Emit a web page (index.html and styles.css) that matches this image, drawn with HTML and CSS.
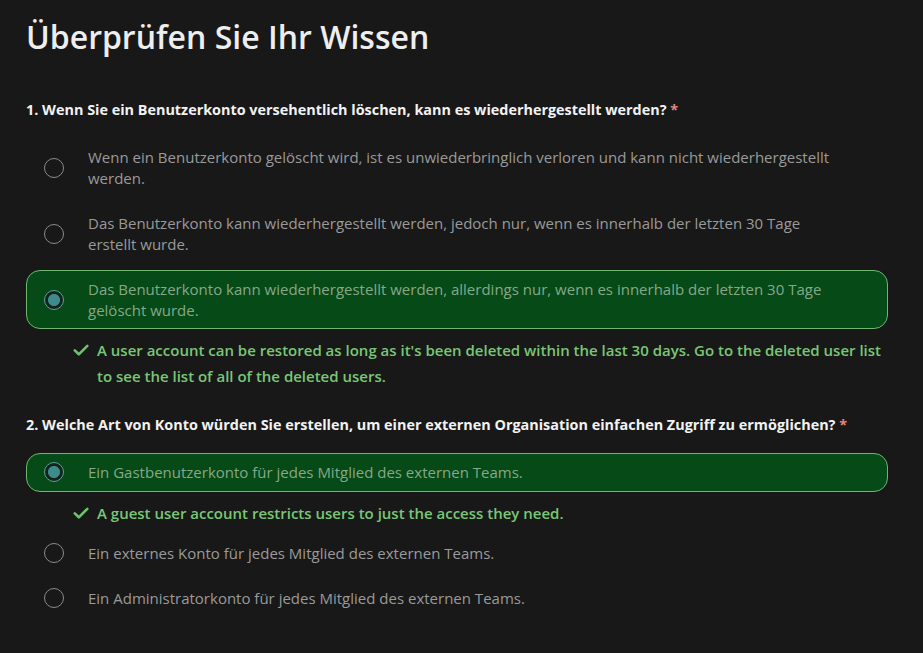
FILE: index.html
```html
<!DOCTYPE html>
<html lang="de">
<head>
<meta charset="utf-8">
<title>Überprüfen Sie Ihr Wissen</title>
<link rel="stylesheet" href="styles.css">
</head>
<body>
<main class="quiz">
  <h1 class="title">Überprüfen Sie Ihr Wissen</h1>

  <section class="question">
    <h2 class="q-text">1. Wenn Sie ein Benutzerkonto versehentlich löschen, kann es wiederhergestellt werden? <span class="req">*</span></h2>
    <div class="options">
      <label class="option">
        <span class="radio"></span>
        <span class="opt-text">Wenn ein Benutzerkonto gelöscht wird, ist es unwiederbringlich verloren und kann nicht wiederhergestellt werden.</span>
      </label>
      <label class="option">
        <span class="radio"></span>
        <span class="opt-text">Das Benutzerkonto kann wiederhergestellt werden, jedoch nur, wenn es innerhalb der letzten 30 Tage erstellt wurde.</span>
      </label>
      <label class="option selected">
        <span class="radio"></span>
        <span class="opt-text">Das Benutzerkonto kann wiederhergestellt werden, allerdings nur, wenn es innerhalb der letzten 30 Tage gelöscht wurde.</span>
      </label>
      <div class="feedback">
        <svg class="check" viewBox="0 0 16 16" width="16" height="16"><path d="M1.8 8.4 L5.8 12.3 L14.3 3.8" fill="none" stroke="currentColor" stroke-width="2.6" stroke-linecap="round" stroke-linejoin="round"/></svg>
        <p class="fb-text">A user account can be restored as long as it's been deleted within the last 30 days. Go to the deleted user list to see the list of all of the deleted users.</p>
      </div>
    </div>
  </section>

  <section class="question">
    <h2 class="q-text">2. Welche Art von Konto würden Sie erstellen, um einer externen Organisation einfachen Zugriff zu ermöglichen? <span class="req">*</span></h2>
    <div class="options">
      <label class="option selected">
        <span class="radio"></span>
        <span class="opt-text">Ein Gastbenutzerkonto für jedes Mitglied des externen Teams.</span>
      </label>
      <div class="feedback">
        <svg class="check" viewBox="0 0 16 16" width="16" height="16"><path d="M1.8 8.4 L5.8 12.3 L14.3 3.8" fill="none" stroke="currentColor" stroke-width="2.6" stroke-linecap="round" stroke-linejoin="round"/></svg>
        <p class="fb-text">A guest user account restricts users to just the access they need.</p>
      </div>
      <label class="option">
        <span class="radio"></span>
        <span class="opt-text">Ein externes Konto für jedes Mitglied des externen Teams.</span>
      </label>
      <label class="option">
        <span class="radio"></span>
        <span class="opt-text">Ein Administratorkonto für jedes Mitglied des externen Teams.</span>
      </label>
    </div>
  </section>
</main>
</body>
</html>
```

FILE: styles.css
```css
* { box-sizing: border-box; }

html, body {
  margin: 0;
  padding: 0;
  background: #181818;
}

body {
  font-family: "Open Sans", "Noto Sans", "Liberation Sans", sans-serif;
  color: #f0f0f0;
}

.quiz {
  width: 862px;
  margin-left: 26px;
  padding-top: 15px;
}

.title {
  margin: 0 0 41px;
  font-size: 32px;
  font-weight: 600;
  line-height: 44px;
  color: #eeeeee;
}

.question {
  margin-bottom: 25px;
}

.q-text {
  margin: 0 0 18px;
  font-size: 14.4px;
  font-weight: 700;
  line-height: 20px;
  color: #f2f2f2;
}

.req {
  color: #e0877c;
}

.options {
  display: flex;
  flex-direction: column;
  gap: 7px;
}

.option {
  display: flex;
  align-items: center;
  gap: 24px;
  padding: 8px 17px;
  border: 1px solid transparent;
  border-radius: 14px;
  font-size: 15px;
  line-height: 20.5px;
  color: #9a9a9a;
}

.opt-text {
  max-width: 760px;
}

.radio {
  flex: none;
  width: 20px;
  height: 20px;
  border-radius: 50%;
  border: 1.3px solid #8a8a8a;
}

.option.selected {
  background: #054a17;
  border-color: #71b66f;
  color: #87a887;
}

.option.selected .radio {
  border: 1px solid #5f9c9b;
  background: radial-gradient(circle, #3e8b8e 0 5.6px, #14261a 6.4px);
}

.feedback {
  display: flex;
  align-items: flex-start;
  gap: 8px;
  margin: 1px 0 1px;
  padding-left: 47px;
  color: #79c776;
  font-size: 15px;
  font-weight: 600;
  line-height: 26px;
}

.check {
  flex: none;
  margin-top: 5px;
  color: #6cc46a;
}

.fb-text {
  margin: 0;
}
```
